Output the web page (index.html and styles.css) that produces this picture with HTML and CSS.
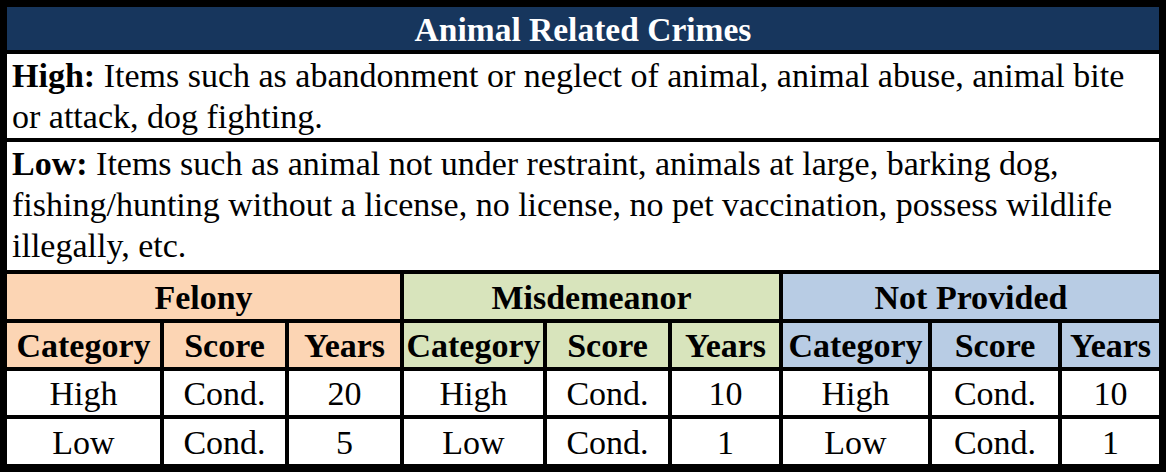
FILE: index.html
```html
<!DOCTYPE html>
<html>
<head>
<meta charset="utf-8">
<link rel="stylesheet" href="styles.css">
</head>
<body>
<div class="sheet">
  <div class="title">Animal Related Crimes</div>
  <div class="desc desc-high"><b>High:</b> Items such as abandonment or neglect of animal, animal abuse, animal bite or attack, dog fighting.</div>
  <div class="desc desc-low"><b>Low:</b> Items such as animal not under restraint, animals at large, barking dog, fishing/hunting without a license, no license, no pet vaccination, possess wildlife illegally, etc.</div>

  <div class="group felony">Felony</div>
  <div class="group misd">Misdemeanor</div>
  <div class="group np">Not Provided</div>

  <div class="head felony">Category</div>
  <div class="head felony">Score</div>
  <div class="head felony">Years</div>
  <div class="head misd">Category</div>
  <div class="head misd">Score</div>
  <div class="head misd">Years</div>
  <div class="head np">Category</div>
  <div class="head np">Score</div>
  <div class="head np">Years</div>

  <div class="cell">High</div>
  <div class="cell">Cond.</div>
  <div class="cell">20</div>
  <div class="cell">High</div>
  <div class="cell">Cond.</div>
  <div class="cell">10</div>
  <div class="cell">High</div>
  <div class="cell">Cond.</div>
  <div class="cell">10</div>

  <div class="cell">Low</div>
  <div class="cell">Cond.</div>
  <div class="cell">5</div>
  <div class="cell">Low</div>
  <div class="cell">Cond.</div>
  <div class="cell">1</div>
  <div class="cell">Low</div>
  <div class="cell">Cond.</div>
  <div class="cell">1</div>
</div>
</body>
</html>
```

FILE: styles.css
```css
html, body {
  margin: 0;
  padding: 0;
  background: #ffffff;
}

.sheet {
  width: 1166px;
  height: 472px;
  box-sizing: border-box;
  background: #000000;
  padding: 7px 7px 8px 7px;
  display: grid;
  grid-template-columns: 153px 121px 111px 139px 121px 107px 145px 126px 97px;
  grid-template-rows: 43px 84px 128px 45px 44px 44px 45px;
  gap: 4px;
  font-family: "Liberation Serif", "Times New Roman", serif;
  color: #000000;
}

.title {
  grid-column: 1 / -1;
  background: #17365d;
  color: #ffffff;
  font-weight: bold;
  font-size: 33.5px;
  display: flex;
  align-items: center;
  justify-content: center;
  padding-top: 2px;
}

.desc {
  grid-column: 1 / -1;
  background: #ffffff;
  font-size: 34px;
  line-height: 41px;
  padding: 1px 10px 0 5px;
}

.group,
.head,
.cell {
  display: flex;
  align-items: center;
  justify-content: center;
  font-size: 34px;
  white-space: nowrap;
  padding-top: 2px;
}

.group {
  grid-column: span 3;
  font-weight: bold;
}

.head {
  font-weight: bold;
}

.cell {
  background: #ffffff;
}

.felony {
  background: #fcd5b4;
}

.misd {
  background: #d8e4bc;
}

.np {
  background: #b8cce4;
}
```
